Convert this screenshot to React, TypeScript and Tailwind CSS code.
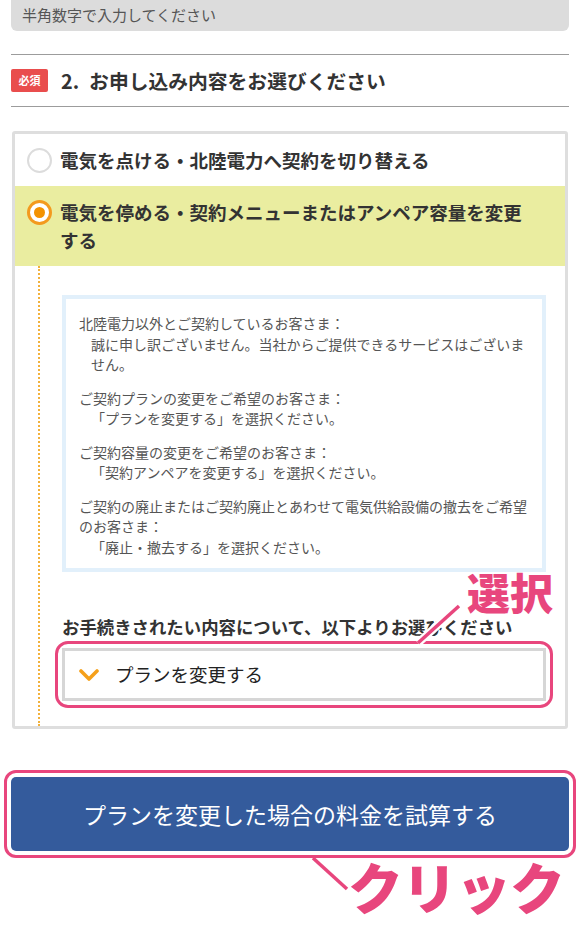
import React from 'react'

const PINK = '#e8467d'

function Radio({ checked }: { checked?: boolean }) {
  if (checked) {
    return (
      <span className="mt-[2px] flex h-[25px] w-[25px] shrink-0 items-center justify-center rounded-full border-[3px] border-[#f39a1e] bg-white">
        <span className="h-[11px] w-[11px] rounded-full bg-[#f39200]" />
      </span>
    )
  }
  return <span className="h-[25px] w-[25px] shrink-0 rounded-full border-2 border-[#dcdcdc] bg-white" />
}

function Chevron() {
  return (
    <svg width="20" height="12" viewBox="0 0 20 12" className="shrink-0">
      <path d="M2 2 L10 10 L18 2" fill="none" stroke="#f5a01a" strokeWidth="3.6" strokeLinecap="round" strokeLinejoin="round" />
    </svg>
  )
}

const notes = [
  { head: '北陸電力以外とご契約しているお客さま：', body: '誠に申し訳ございません。当社からご提供できるサービスはございません。' },
  { head: 'ご契約プランの変更をご希望のお客さま：', body: '「プランを変更する」を選択ください。' },
  { head: 'ご契約容量の変更をご希望のお客さま：', body: '「契約アンペアを変更する」を選択ください。' },
  { head: 'ご契約の廃止またはご契約廃止とあわせて電気供給設備の撤去をご希望のお客さま：', body: '「廃止・撤去する」を選択ください。' },
]

export default function App() {
  return (
    <div className="relative h-[940px] w-[580px] overflow-hidden bg-white font-['Noto_Sans_CJK_JP','Noto_Sans',sans-serif]">
      <div className="px-[11px]">
        {/* previous field */}
        <div className="flex h-[31px] items-center rounded-b-[6px] bg-[#dcdcdc] pl-[11px] text-[15px] text-[#555]">
          半角数字で入力してください
        </div>

        {/* section header */}
        <div className="mt-[23px] flex h-[53px] items-center border-y border-[#9c9c9c]">
          <span className="flex h-[23px] w-[37px] items-center justify-center rounded-[2px] bg-[#e94d4d] text-[11px] font-bold text-white">
            必須
          </span>
          <h2 className="ml-[13px] text-[19.8px] font-bold text-[#333]">
            2.<span className="ml-[10px]">お申し込み内容をお選びください</span>
          </h2>
        </div>

        {/* options */}
        <div className="mx-[1px] mt-[24px] rounded-[3px] border-[3px] border-[#dedede]">
          <div className="flex items-center gap-[8px] py-[12px] pl-[12px] text-[18.5px] font-bold leading-[28px] text-[#333]">
            <Radio />
            <span>電気を点ける・北陸電力へ契約を切り替える</span>
          </div>
          <div className="flex items-start gap-[8px] bg-[#eaeda0] py-[12px] pl-[12px] pr-[30px] text-[18.5px] font-bold leading-[28px] text-[#333]">
            <Radio checked />
            <span>電気を停める・契約メニューまたはアンペア容量を変更する</span>
          </div>

          <div className="ml-[23px] border-l-2 border-dotted border-[#f2b13c] pb-[18px] pl-[22px] pr-[19px] pt-[29px]">
            <div className="border-4 border-[#e2f0fb] pb-[11px] pl-[13px] pr-[8px] pt-[14px] text-[14px] leading-[20.5px] text-[#555]">
              {notes.map((n, i) => (
                <div key={i} className={i > 0 ? 'mt-[13px]' : ''}>
                  <p>{n.head}</p>
                  <p className="pl-[12px]">{n.body}</p>
                </div>
              ))}
            </div>

            <p className="mt-[42px] whitespace-nowrap text-[17.4px] font-bold leading-[26px] text-[#333]">
              お手続きされたい内容について、以下よりお選びください
            </p>

            <div className="-mx-[7px] mt-[1px] rounded-[13px] border-[3px] border-[#e8467d] p-[4px]">
              <div className="flex h-[53px] items-center gap-[16px] border-[3px] border-[#d6d6d6] bg-white pl-[14px] text-[18.5px] text-[#222]">
                <Chevron />
                <span>プランを変更する</span>
              </div>
            </div>
          </div>
        </div>

        {/* submit */}
        <div className="-mx-[7px] mt-[41px] rounded-[12px] border-[3px] border-[#e8467d] p-[4px]">
          <button className="flex h-[74px] w-full items-center justify-center rounded-[5px] bg-[#345b9c] text-[23px] text-white">
            プランを変更した場合の料金を試算する
          </button>
        </div>
      </div>

      {/* annotations */}
      <svg className="absolute left-0 top-0" width="580" height="940">
        <line x1="418" y1="643" x2="459" y2="606" stroke="#fff" strokeWidth="8" />
        <line x1="418" y1="643" x2="459" y2="606" stroke={PINK} strokeWidth="3.5" />
        <line x1="313" y1="858" x2="347" y2="889" stroke={PINK} strokeWidth="3.5" />
      </svg>
      <div className="absolute left-[467px] top-[570px] text-[43px] font-black leading-none text-[#e8467d]">選択</div>
      <div className="absolute left-[348px] top-[858px] text-[55px] font-black leading-none tracking-[-1px] text-[#e8467d]">
        クリック
      </div>
    </div>
  )
}
